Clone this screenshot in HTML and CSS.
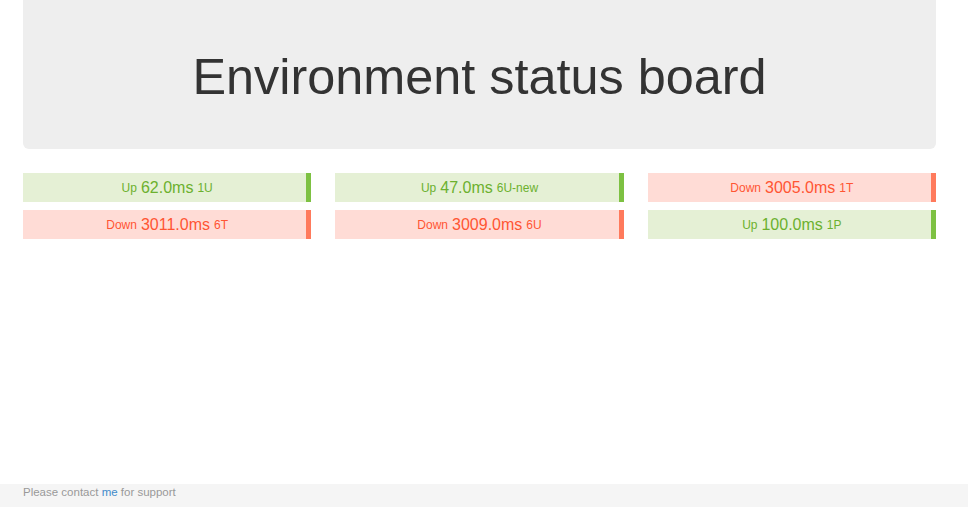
FILE: index.html
```html
<!DOCTYPE html>
<html>
<head>
<meta charset="utf-8">
<link rel="stylesheet" href="styles.css">
</head>
<body>
<div class="page">
  <div class="container">
    <div class="jumbotron"><h1>Environment status board</h1></div>
    <div class="grid">
      <div class="cell up"><span class="s">Up</span> <span class="ms">62.0ms</span> <span class="s">1U</span></div>
      <div class="cell up"><span class="s">Up</span> <span class="ms">47.0ms</span> <span class="s">6U-new</span></div>
      <div class="cell down"><span class="s">Down</span> <span class="ms">3005.0ms</span> <span class="s">1T</span></div>
      <div class="cell down"><span class="s">Down</span> <span class="ms">3011.0ms</span> <span class="s">6T</span></div>
      <div class="cell down"><span class="s">Down</span> <span class="ms">3009.0ms</span> <span class="s">6U</span></div>
      <div class="cell up"><span class="s">Up</span> <span class="ms">100.0ms</span> <span class="s">1P</span></div>
    </div>
  </div>
  <div class="footer"><span>Please contact <a href="#">me</a> for support</span></div>
</div>
</body>
</html>
```
FILE: styles.css
```css
html, body { margin: 0; padding: 0; }
body { font-family: "Liberation Sans", Arial, sans-serif; color: #333; background: #fff; }
.page { height: 507px; display: flex; flex-direction: column; }
.container { width: 913px; margin-left: 23px; flex: 1; }
.jumbotron { background: #eee; height: 149px; border-radius: 0 0 6px 6px; display: flex; align-items: center; justify-content: center; }
.jumbotron h1 { margin: 4px 0 0 0; font-weight: normal; font-size: 50.4px; color: #333; }
.grid { display: grid; grid-template-columns: repeat(3, 1fr); column-gap: 24px; row-gap: 8px; margin-top: 24px; }
.cell { height: 29px; padding-top: 1px; display: flex; align-items: center; justify-content: center; gap: 4px; box-sizing: border-box; }
.cell .s { font-size: 12px; }
.cell .ms { font-size: 16px; }
.up { background: #e5f0d5; color: #6cb12e; box-shadow: inset -5px 0 0 #7dc142; }
.down { background: #ffdcd6; color: #ff5533; box-shadow: inset -5px 0 0 #ff7a5c; }
.footer { background: #f5f5f5; height: 23px; box-sizing: border-box; padding: 1px 0 0 23px; font-size: 11.5px; line-height: 14px; color: #999; }
.footer a { color: #428bca; text-decoration: none; }
```
